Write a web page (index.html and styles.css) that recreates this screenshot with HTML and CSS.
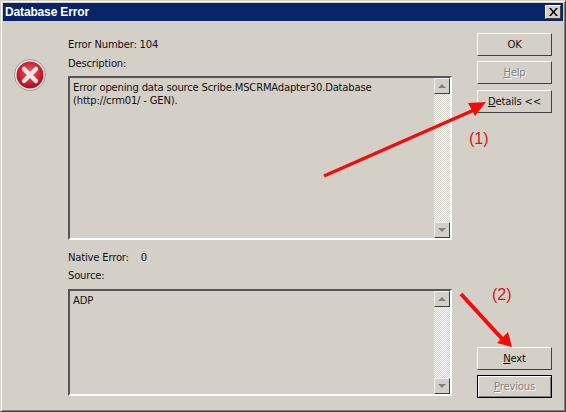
FILE: index.html
```html
<!DOCTYPE html>
<html lang="en">
<head>
    <meta charset="UTF-8">
    <title>Database Error</title>
    <link rel="stylesheet" href="styles.css">
</head>
<body>
    <div class="window">
        <div class="titlebar">
            <span>Database Error</span>
            <span class="close">
                <svg width="9" height="8" viewBox="0 0 9 8"><path d="M0 0h2l2.500 3L7 0h2L5.500 4 9 8H7L4.500 5 2 8H0l3.500-4z" fill="#000"/></svg>
            </span>
        </div>
        <div class="content">
            <div class="icon-col">
                <svg width="32" height="32" viewBox="0 0 32 32">
                    <defs>
                        <radialGradient id="redball" cx="50%" cy="40%" r="60%">
                            <stop offset="0" stop-color="#e8606a"/>
                            <stop offset="0.7" stop-color="#c81e2c"/>
                            <stop offset="1" stop-color="#a01020"/>
                        </radialGradient>
                    </defs>
                    <circle cx="16" cy="16" r="15.500" fill="#eee" stroke="#999" stroke-width="1"/>
                    <circle cx="16" cy="16" r="13.500" fill="url(#redball)"/>
                    <path d="M10 10L22 22M22 10L10 22" stroke="#efe6e6" stroke-width="4.500" stroke-linecap="round"/>
                </svg>
            </div>
            <div class="main-col">
                <div class="label first">Error Number: 104</div>
                <div class="label tight">Description:</div>
                <div class="textbox big">
                    <div class="text">Error opening data source Scribe.MSCRMAdapter30.Database<br>(http://crm01/ - GEN).</div>
                    <div class="scrollbar">
                        <div class="scroll-btn"><span class="arrow-up"></span></div>
                        <div class="scroll-btn"><span class="arrow-down"></span></div>
                    </div>
                </div>
                <div class="label native tight">Native Error:&nbsp;&nbsp;&nbsp; 0</div>
                <div class="label">Source:</div>
                <div class="textbox small">
                    <div class="text">ADP</div>
                    <div class="scrollbar">
                        <div class="scroll-btn"><span class="arrow-up"></span></div>
                        <div class="scroll-btn"><span class="arrow-down"></span></div>
                    </div>
                </div>
            </div>
            <div class="button-col">
                <div class="button-group">
                    <div class="button">OK</div>
                    <div class="button disabled"><span><u>H</u>elp</span></div>
                    <div class="button details"><span><u>D</u>etails &lt;&lt;</span></div>
                </div>
                <div class="button-group lower">
                    <div class="button"><span><u>N</u>ext</span></div>
                    <div class="button disabled default"><span><u>P</u>revious</span></div>
                </div>
            </div>
        </div>
        <svg class="arrows" width="566" height="412" viewBox="0 0 566 412">
            <path d="M324 176L474 110" stroke="#f00d0d" stroke-width="3.500" fill="none"/>
            <path d="M486 102L468 103L475 116z" fill="#f00d0d"/>
            <path d="M461 294L505 342" stroke="#f00d0d" stroke-width="4" fill="none"/>
            <path d="M512 347L497 343L508 332z" fill="#f00d0d"/>
        </svg>
        <div class="note note-one">(1)</div>
        <div class="note note-two">(2)</div>
    </div>
</body>
</html>
```

FILE: styles.css
```css
* {
    box-sizing: border-box;
}
body {
    margin: 0;
    font-family: "DejaVu Sans", Tahoma, sans-serif;
    font-size: 10px;
    letter-spacing: -0.18px;
    color: #111;
    background-color: #d4d0c8;
}
.window {
    position: relative;
    width: 566px;
    height: 412px;
    border: 1px solid;
    border-color: #d4d0c8 #404040 #404040 #d4d0c8;
    box-shadow: inset 1px 1px 0 #fff, inset -1px -1px 0 #808080;
    display: flex;
    flex-direction: column;
    overflow: hidden;
}
.titlebar {
    margin: 2px 2px 0 2px;
    height: 18px;
    background-color: #0a246a;
    color: white;
    font-family: "Liberation Sans", Arial, sans-serif;
    font-weight: bold;
    font-size: 12px;
    letter-spacing: -0.15px;
    padding: 0 2px 0 2px;
    display: flex;
    justify-content: space-between;
    align-items: center;
}
.close {
    width: 16px;
    height: 14px;
    background-color: #d4d0c8;
    border: 1px solid;
    border-color: #fff #404040 #404040 #fff;
    display: flex;
    align-items: center;
    justify-content: center;
}
.content {
    flex: 1;
    display: flex;
}
.icon-col {
    width: 67px;
    padding: 38px 0 0 13px;
}
.main-col {
    width: 384px;
    display: flex;
    flex-direction: column;
}
.label {
    height: 12px;
    line-height: 12px;
    margin-bottom: 7px;
    white-space: nowrap;
}
.label.tight {
    margin-bottom: 6px;
}
.label.first {
    margin-top: 18px;
}
.label.native {
    margin-top: 12px;
}
.textbox {
    display: flex;
    border: 2px solid;
    border-color: #555 #fff #fff #555;
}
.textbox.big {
    height: 164px;
}
.textbox.small {
    height: 107px;
}
.text {
    flex: 1;
    padding: 3px 0 0 3px;
    line-height: 13px;
}
.scrollbar {
    width: 16px;
    display: flex;
    flex-direction: column;
    justify-content: space-between;
    background: repeating-conic-gradient(#fff 0 25%, #d4d0c8 0 50%) 0 0 / 2px 2px;
}
.scroll-btn {
    height: 16px;
    background-color: #d4d0c8;
    border: 1px solid;
    border-color: #eee #404040 #404040 #eee;
    display: flex;
    align-items: center;
    justify-content: center;
}
.arrow-up, .arrow-down {
    width: 0;
    height: 0;
    border-left: 4px solid transparent;
    border-right: 4px solid transparent;
}
.arrow-up {
    border-bottom: 4px solid #808080;
}
.arrow-down {
    border-top: 4px solid #808080;
}
.button-col {
    margin-left: 25px;
    width: 75px;
    padding-top: 12px;
    display: flex;
    flex-direction: column;
}
.button-group {
    display: flex;
    flex-direction: column;
    gap: 5px;
}
.button-group.lower {
    margin-top: 234px;
}
.button {
    height: 23px;
    background-color: #d4d0c8;
    border: 1px solid;
    border-color: #fff #404040 #404040 #fff;
    display: flex;
    align-items: center;
    justify-content: center;
}
.button.details {
    margin-top: 1px;
}
.button.disabled {
    color: #808080;
    text-shadow: 1px 1px 0 #fff;
}
.button.default {
    border-color: #000;
    box-shadow: inset 1px 1px 0 #fff, inset -1px -1px 0 #808080;
}
.arrows {
    position: absolute;
    left: -1px;
    top: -1px;
}
.note {
    position: absolute;
    color: #d01818;
    font-family: "Liberation Sans", Arial, sans-serif;
    font-size: 16px;
    letter-spacing: 0;
}
.note-one {
    left: 468px;
    top: 129px;
}
.note-two {
    left: 491px;
    top: 285px;
}
```
